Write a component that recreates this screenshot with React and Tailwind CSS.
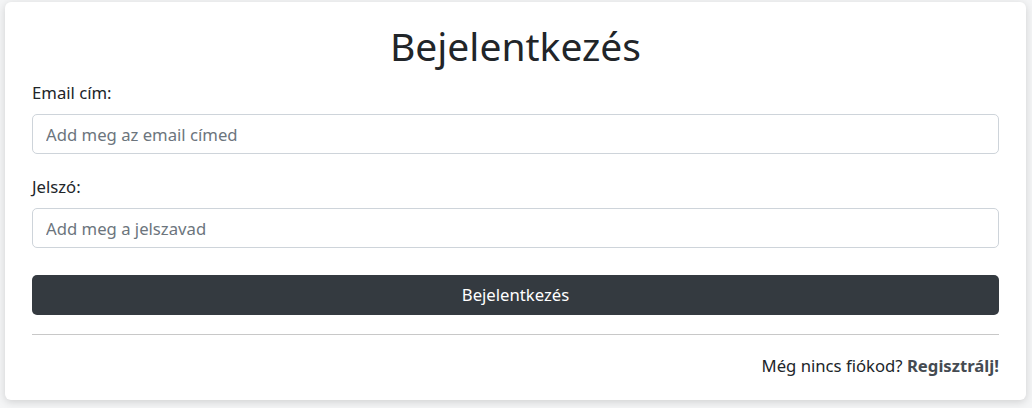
export default function App() {
  return (
    <div
      className="w-[1032px] h-[408px] overflow-hidden bg-[#f4f5f6] pl-[5px] pr-[6px] pt-[2px]"
      style={{ fontFamily: '"Noto Sans", "Open Sans", sans-serif' }}
    >
      <div className="bg-white rounded-md shadow-[0_2px_8px_rgba(0,0,0,0.15)] h-[398px] px-[27px] pt-[20px] text-[#212529]">
        <h1 className="text-center text-[39px] leading-[48px] font-normal mb-[11px]">
          Bejelentkezés
        </h1>

        <form className="flex flex-col">
          <label className="text-[16.7px] leading-6 mb-[9px]">Email cím:</label>
          <input
            type="email"
            placeholder="Add meg az email címed"
            className="h-[40px] w-full rounded-[5px] border border-[#ced4da] px-[13px] text-[16.7px] placeholder:text-[#6c757d] outline-none"
          />

          <label className="text-[16.7px] leading-6 mt-[21px] mb-[9px]">Jelszó:</label>
          <input
            type="password"
            placeholder="Add meg a jelszavad"
            className="h-[40px] w-full rounded-[5px] border border-[#ced4da] px-[13px] text-[16.7px] placeholder:text-[#6c757d] outline-none"
          />

          <button
            type="button"
            className="mt-[27px] h-[40px] w-full rounded-[5px] bg-[#343a40] text-white text-[16.7px] cursor-pointer"
          >
            Bejelentkezés
          </button>
        </form>

        <hr className="mt-[19px] border-t border-[#c8c8c8]" />

        <p className="text-right text-[16.7px] mt-[18px]">
          Még nincs fiókod? <a href="#" className="font-bold text-[#454b52]">Regisztrálj!</a>
        </p>
      </div>
    </div>
  );
}
